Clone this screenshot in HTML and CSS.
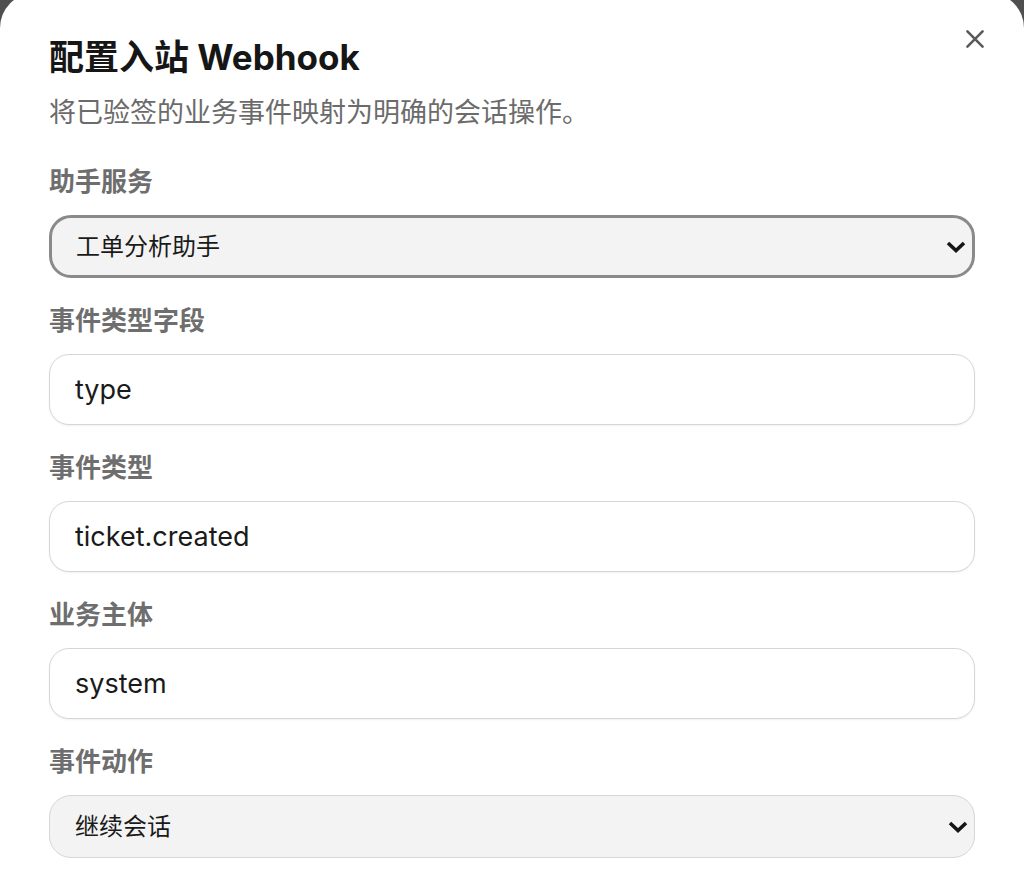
FILE: index.html
```
<!DOCTYPE html>
<html lang="zh-CN">
<head>
    <meta charset="UTF-8">
    <meta name="viewport" content="width=device-width, initial-scale=1.0">
    <title>配置入站 Webhook</title>
    <link rel="stylesheet" href="styles.css">
</head>
<body>
    <div class="modal">
        <button class="close-button" aria-label="关闭">
            <svg viewBox="0 0 24 24" width="26" height="26">
                <path d="M5 5 L19 19 M19 5 L5 19" stroke="currentColor" stroke-width="2.4" stroke-linecap="round"/>
            </svg>
        </button>
        <h1>配置入站 Webhook</h1>
        <p class="subtitle">将已验签的业务事件映射为明确的会话操作。</p>

        <form class="form">
            <label class="field">
                <span class="label">助手服务</span>
                <select class="control select focused">
                    <option>工单分析助手</option>
                </select>
            </label>
            <label class="field">
                <span class="label">事件类型字段</span>
                <input class="control input" type="text" value="type">
            </label>
            <label class="field">
                <span class="label">事件类型</span>
                <input class="control input" type="text" value="ticket.created">
            </label>
            <label class="field">
                <span class="label">业务主体</span>
                <input class="control input" type="text" value="system">
            </label>
            <label class="field">
                <span class="label">事件动作</span>
                <select class="control select">
                    <option>继续会话</option>
                </select>
            </label>
        </form>
    </div>
</body>
</html>
```

FILE: styles.css
```
html, body {
    margin: 0;
    padding: 0;
    height: 100%;
    overflow: hidden;
}

body {
    background-color: #4f4f4f;
    font-family: Inter, "Noto Sans CJK SC", sans-serif;
    color: #1a1a1a;
}

.modal {
    position: relative;
    margin-top: -7px;
    background-color: #fff;
    border-radius: 35px 35px 0 0;
    padding: 42px 49px 40px 49px;
    min-height: 900px;
    box-sizing: border-box;
}

.close-button {
    position: absolute;
    top: 31px;
    right: 34px;
    width: 30px;
    height: 30px;
    padding: 0;
    border: none;
    background: none;
    color: #5a5a5a;
    cursor: pointer;
    display: flex;
    align-items: center;
    justify-content: center;
}

h1 {
    margin: 0;
    font-size: 35px;
    line-height: 44px;
    font-weight: 700;
    color: #161616;
}

.subtitle {
    margin: 14px 0 0;
    font-size: 27px;
    line-height: 40px;
    color: #6b6b6b;
}

.form {
    margin-top: 32px;
    display: flex;
    flex-direction: column;
    gap: 26px;
}

.field {
    display: flex;
    flex-direction: column;
    gap: 16px;
}

.label {
    font-size: 26px;
    line-height: 34px;
    font-weight: 600;
    color: #6e6e6e;
}

.control {
    width: 100%;
    box-sizing: border-box;
    font-family: Inter, "Noto Sans CJK SC", sans-serif;
    color: #1a1a1a;
    margin: 0;
    outline: none;
}

.input {
    height: 71px;
    padding: 0 25px;
    font-size: 27px;
    background-color: #fff;
    border: 1.5px solid #d6d6d6;
    border-radius: 20px;
    box-shadow: 0 1px 2px rgba(0, 0, 0, 0.06);
}

.select {
    height: 63px;
    padding: 0 25px;
    font-size: 24px;
    background-color: #f3f3f3;
    border: 1.5px solid #d6d6d6;
    border-radius: 22px;
    appearance: none;
    background-image: url("data:image/svg+xml,%3Csvg xmlns='http://www.w3.org/2000/svg' width='22' height='14' viewBox='0 0 22 14'%3E%3Cpath d='M3 3 L11 10.5 L19 3' fill='none' stroke='%23161616' stroke-width='3.6'/%3E%3C/svg%3E");
    background-repeat: no-repeat;
    background-position: right 5px center;
    background-size: 22px 14px;
}

.select.focused {
    border: 3px solid #8a8a8a;
    padding-left: 24px;
}
```
